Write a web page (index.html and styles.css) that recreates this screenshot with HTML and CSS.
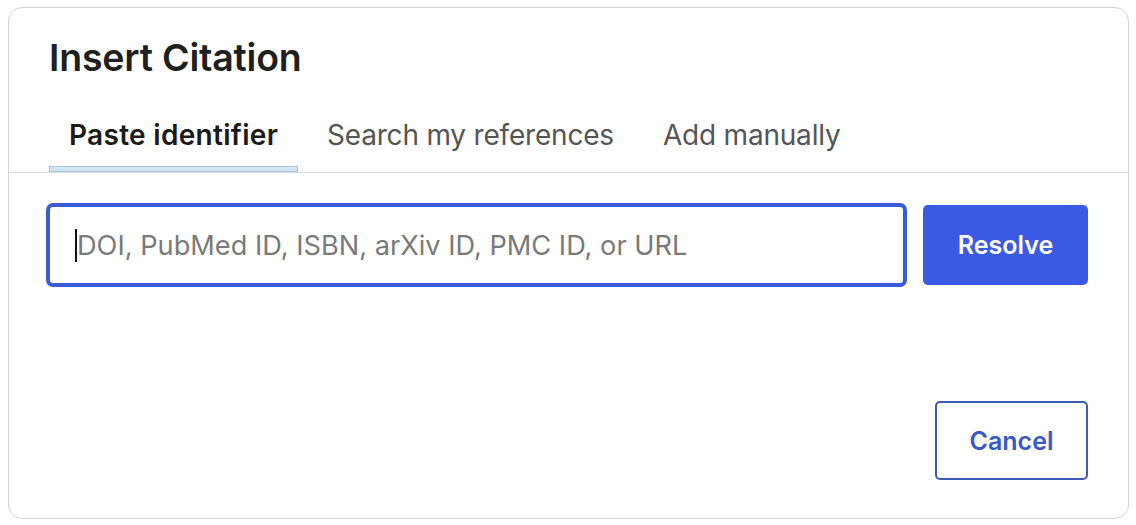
FILE: index.html
```html
<!DOCTYPE html>
<html>
<head>
<meta charset="utf-8">
<link rel="stylesheet" href="styles.css">
</head>
<body>
<div class="dialog">
  <div class="header">
    <h1 class="title">Insert Citation</h1>
    <div class="tabs">
      <div class="tab active">Paste identifier</div>
      <div class="tab">Search my references</div>
      <div class="tab">Add manually</div>
    </div>
  </div>
  <div class="body">
    <div class="row">
      <div class="input"><span class="caret"></span><span class="placeholder">DOI, PubMed ID, ISBN, arXiv ID, PMC ID, or URL</span></div>
      <button class="btn primary">Resolve</button>
    </div>
  </div>
  <div class="footer">
    <button class="btn secondary">Cancel</button>
  </div>
</div>
</body>
</html>
```

FILE: styles.css
```css
* { box-sizing: border-box; }
html, body { margin: 0; padding: 0; background: #ffffff; }
body { font-family: Inter, "Noto Sans", sans-serif; }

.dialog {
  margin: 7px 7px 0 8px;
  height: 512px;
  border: 1px solid #d4d4d4;
  border-radius: 14px;
  display: flex;
  flex-direction: column;
  background: #fff;
}

.header {
  border-bottom: 1px solid #dcdcdc;
  padding: 0 40px;
}

.title {
  margin: 27px 0 0 0;
  font-size: 37.5px;
  line-height: 46px;
  font-weight: 600;
  color: #1f1f1f;
  letter-spacing: -0.2px;
}

.tabs {
  display: flex;
  gap: 9px;
  margin-top: 31px;
}

.tab {
  position: relative;
  padding: 0 20px;
  height: 60px;
  font-size: 28px;
  line-height: 46px;
  color: #555555;
  letter-spacing: -0.2px;
}

.tab.active {
  color: #1a1a1a;
  font-weight: 600;
  letter-spacing: 0.3px;
}

.tab.active::after {
  content: "";
  position: absolute;
  left: 0;
  right: 0;
  bottom: 0;
  height: 4px;
  background: #d3e4f4;
  border: 1px solid #a9c7e4;
}

.body {
  padding: 30px 40px 0 37px;
  flex: 1;
}

.row {
  display: flex;
  align-items: center;
  gap: 16px;
}

.input {
  flex: 1;
  height: 84px;
  border: 4px solid #3a5bd9;
  border-radius: 7px;
  display: flex;
  align-items: center;
  padding-left: 25px;
}

.caret {
  width: 2px;
  height: 33px;
  background: #111;
}

.placeholder {
  font-size: 27.2px;
  color: #7a7a7a;
}

.btn {
  font-family: Inter, "Noto Sans", sans-serif;
  font-size: 25px;
  font-weight: 600;
  border-radius: 5px;
  cursor: pointer;
}

.primary {
  width: 165px;
  height: 80px;
  background: #3a5ae6;
  color: #fff;
  border: none;
}

.footer {
  display: flex;
  justify-content: flex-end;
  padding: 0 40px 38px 0;
}

.secondary {
  width: 153px;
  height: 79px;
  background: #fff;
  color: #3a58c8;
  border: 2px solid #3d5bb5;
}
```
